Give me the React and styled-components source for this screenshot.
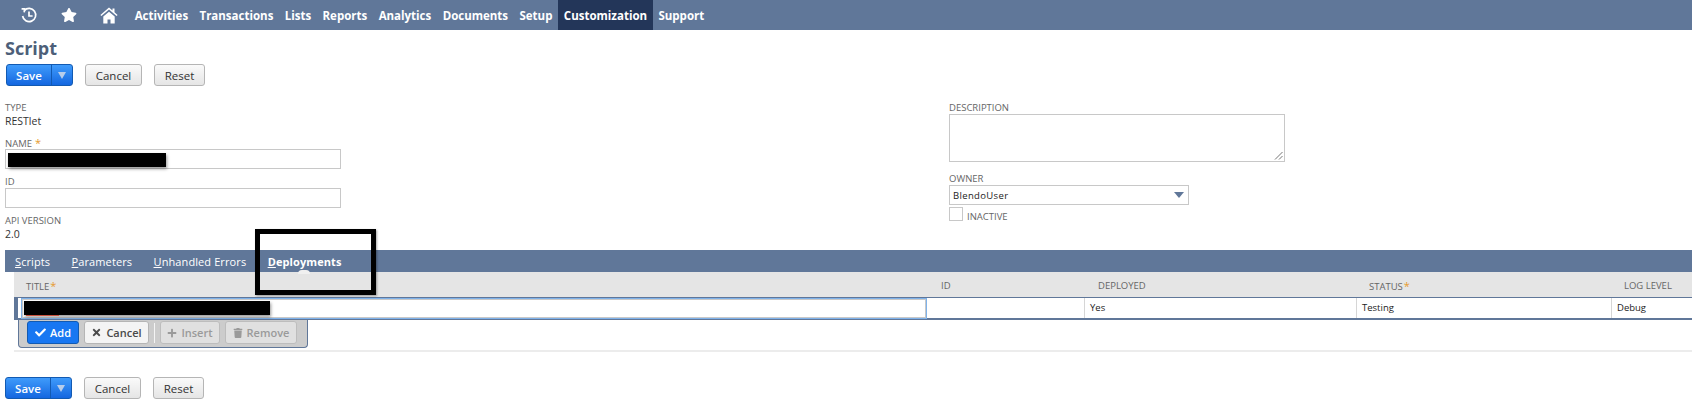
import React from 'react'
import styled, { createGlobalStyle } from 'styled-components'
import { FaStar, FaCheck, FaTimes, FaPlus, FaTrash } from 'react-icons/fa'

const GlobalStyle = createGlobalStyle`
  html, body { margin: 0; padding: 0; background: #fff; overflow: hidden; }
  body { font-family: "Open Sans", sans-serif; color: #333; }
`

const Page = styled.div`
  position: relative;
  width: 1692px;
  height: 408px;
  overflow: hidden;
`

const NavBar = styled.div`
  display: flex;
  align-items: stretch;
  height: 30px;
  background: #607799;
`

const NavIcons = styled.div`
  display: flex;
  align-items: center;
  gap: 23px;
  padding: 0 11px 0 20px;
  color: #fff;
`

const NavItem = styled.div`
  display: flex;
  align-items: center;
  padding: 0 5.7px;
  font-size: 11.5px;
  font-weight: 700;
  color: #fff;
  background: ${p => (p.$active ? '#233659' : 'transparent')};
`

const Title = styled.h1`
  margin: 6px 0 0 5px;
  font-size: 18px;
  line-height: 24px;
  font-weight: 700;
  color: #4d5f79;
`

const ButtonRow = styled.div`
  display: flex;
  margin: ${p => p.$margin};
`

const SaveButton = styled.div`
  display: flex;
  box-sizing: border-box;
  height: 22px;
  margin-right: 12px;
  border: 1px solid #125ab2;
  border-radius: 3px;
  background: linear-gradient(#3f9bfb, #1467e0);
  color: #fff;
  font-size: 11.5px;
  font-weight: 600;
`

const SaveLabel = styled.div`
  display: flex;
  align-items: center;
  justify-content: center;
  width: 44px;
  border-right: 1px solid #125ab2;
`

const SaveArrow = styled.div`
  display: flex;
  align-items: center;
  justify-content: center;
  width: 20px;
`

const ArrowGlyph = styled.span`
  width: 0;
  height: 0;
  border-left: 4px solid transparent;
  border-right: 4px solid transparent;
  border-top: 7px solid #b7cdea;
`

const GreyButton = styled.div`
  display: flex;
  align-items: center;
  justify-content: center;
  box-sizing: border-box;
  width: ${p => p.$width}px;
  height: 22px;
  margin-right: 12px;
  border: 1px solid #b5b5b5;
  border-radius: 3px;
  background: linear-gradient(#fafafa, #e5e5e5);
  color: #333;
  font-size: 11.5px;
`

const Form = styled.div`
  display: grid;
  grid-template-columns: 944px 1fr;
  margin: 14px 0 0 5px;
  height: 150px;
`

const Column = styled.div`
  display: flex;
  flex-direction: column;
`

const Label = styled.div`
  font-size: 9.5px;
  line-height: 14px;
  height: 13px;
  padding-top: 1px;
  color: #666;
  margin-top: ${p => p.$top || 0}px;
`

const Star = styled.span`
  color: #e69a2e;
  margin-left: ${p => p.$gap || 3}px;
  font-size: 11px;
`

const Value = styled.div`
  font-size: 10.5px;
  line-height: 14px;
  color: #333;
`

const TextInput = styled.div`
  position: relative;
  box-sizing: border-box;
  width: ${p => p.$width}px;
  height: ${p => p.$height}px;
  border: 1px solid #c8c8c8;
  background: #fff;
`

const Redaction = styled.div`
  position: absolute;
  left: ${p => p.$left}px;
  top: ${p => p.$top}px;
  width: ${p => p.$width}px;
  height: 14px;
  background: #000;
  box-shadow: 1px 2px 3px rgba(0, 0, 0, 0.4);
`

const RedTrace = styled.div`
  position: absolute;
  left: 3px;
  top: 15px;
  width: 33px;
  height: 1px;
  background: #c8503c;
`

const Grip = styled.svg`
  position: absolute;
  right: 1px;
  bottom: 1px;
`

const SelectBox = styled(TextInput)`
  display: flex;
  align-items: center;
  justify-content: space-between;
  padding: 0 3px;
  font-size: 9.5px;
  letter-spacing: 0.35px;
  color: #222;
`

const SelectArrow = styled.span`
  width: 0;
  height: 0;
  margin-right: 1px;
  border-left: 5px solid transparent;
  border-right: 5px solid transparent;
  border-top: 6px solid #607799;
`

const CheckRow = styled.div`
  display: flex;
  align-items: flex-end;
  gap: 4px;
  margin-top: 2px;
`

const CheckBox = styled.div`
  box-sizing: border-box;
  width: 14px;
  height: 14px;
  border: 1px solid #c8c8c8;
`

const CheckLabel = styled.div`
  font-size: 9.5px;
  line-height: 11px;
  margin-bottom: -1px;
  color: #666;
`

const TabBar = styled.div`
  display: flex;
  align-items: center;
  gap: 21.4px;
  height: 22px;
  margin-left: 5px;
  padding-left: 10px;
  background: #607799;
`

const Tab = styled.div`
  position: relative;
  font-size: 11px;
  color: #fff;
  font-weight: ${p => (p.$active ? 700 : 400)};
  letter-spacing: 0.1px;

  u { text-underline-offset: 1px; }
`

const TabNotch = styled.span`
  position: absolute;
  left: 50%;
  bottom: -5px;
  margin-left: -7px;
  width: 12px;
  height: 4px;
  border-radius: 6px 6px 0 0;
  background: #f0f0f0;
`

const Machine = styled.div`
  margin-left: 14px;
`

const HeaderRow = styled.div`
  display: grid;
  grid-template-columns: 914px 157px 272px 255px 1fr;
  align-items: center;
  box-sizing: border-box;
  height: 25px;
  padding-top: 1px;
  background: #e5e5e5;
`

const HeaderCell = styled.div`
  font-size: 9.5px;
  color: #666;
  padding-left: ${p => p.$pad}px;
  white-space: nowrap;
`

const DataRow = styled.div`
  display: grid;
  grid-template-columns: 914px 157px 272px 255px 1fr;
  height: 23px;
  box-sizing: border-box;
  border-top: 1px solid #607799;
  border-bottom: 2px solid #607799;
`

const EntryCell = styled.div`
  display: flex;
  align-items: center;
  border-left: 4px solid #607799;
  padding-left: 4px;
`

const EntryInput = styled(TextInput)`
  box-shadow: 0 0 0 1px #7fb2ea;
`

const DataCell = styled.div`
  display: flex;
  align-items: center;
  padding: 0 0 2px ${p => p.$pad || 4}px;
  border-right: 1px solid #d6d6d6;
  font-size: 9.5px;
  color: #222;
  &:last-child { border-right: 0; }
`

const ToolbarWrap = styled.div`
  box-sizing: border-box;
  height: 32px;
  border-bottom: 2px solid #ececec;
`

const Toolbar = styled.div`
  display: flex;
  align-items: center;
  gap: 5px;
  box-sizing: border-box;
  width: 290px;
  height: 28px;
  margin-left: 3.5px;
  padding: 0 0 2px 8.5px;
  background: #cccccc;
  border: 1px solid #607799;
  border-top: 0;
  border-radius: 0 0 4px 4px;
`

const ToolButton = styled.div`
  display: flex;
  align-items: center;
  justify-content: center;
  gap: 4px;
  box-sizing: border-box;
  width: ${p => p.$width}px;
  height: 23px;
  border-radius: 3px;
  font-size: 11px;
  font-weight: 600;
  border: 1px solid ${p => (p.$primary ? '#125ab2' : p.$disabled ? '#bdbdbd' : '#b5b5b5')};
  background: ${p => (p.$primary ? '#1877f2' : p.$disabled ? '#e0e0e0' : '#f4f4f4')};
  color: ${p => (p.$primary ? '#fff' : p.$disabled ? '#9a9a9a' : '#4a4a4a')};
`

const ToolDivider = styled.div`
  width: 1px;
  height: 20px;
  background: #f4f4f4;
`

const Highlight = styled.div`
  position: absolute;
  left: 255px;
  top: 229px;
  box-sizing: border-box;
  width: 121px;
  height: 66px;
  border: 5px solid #000;
  box-shadow: 1px 1px 2px rgba(0, 0, 0, 0.35);
`

function ActionButtons({ margin }) {
  return (
    <ButtonRow $margin={margin}>
      <SaveButton>
        <SaveLabel>Save</SaveLabel>
        <SaveArrow><ArrowGlyph /></SaveArrow>
      </SaveButton>
      <GreyButton $width={57}>Cancel</GreyButton>
      <GreyButton $width={51}>Reset</GreyButton>
    </ButtonRow>
  )
}

export default function App() {
  const menu = ['Activities', 'Transactions', 'Lists', 'Reports', 'Analytics', 'Documents', 'Setup', 'Customization', 'Support']

  return (
    <Page>
      <GlobalStyle />
      <NavBar>
        <NavIcons>
          <svg width="18" height="18" viewBox="0 0 18 18" fill="none" stroke="#fff" strokeWidth="1.7">
            <path d="M4.2 4.6A6.6 6.6 0 1 1 2.6 10" />
            <path d="M1.6 2.8l3 .1-.4 3.4" />
            <path d="M9 5.5V10H12.6" />
          </svg>
          <FaStar size={16} />
          <svg width="18" height="17" viewBox="0 0 18 17" fill="#fff">
            <path d="M9 0.5L0.4 8l1 1.1L9 2.6l7.6 6.5 1-1.1L14.5 5.3V1.5h-2v2L9 .5z" />
            <path d="M3.3 9.6L9 4.7l5.7 4.9v6.9H10.5v-4h-3v4H3.3z" />
          </svg>
        </NavIcons>
        {menu.map(item => (
          <NavItem key={item} $active={item === 'Customization'}>{item}</NavItem>
        ))}
      </NavBar>

      <Title>Script</Title>
      <ActionButtons margin="4px 0 0 6px" />

      <Form>
        <Column>
          <Label>TYPE</Label>
          <Value>RESTlet</Value>
          <Label $top={7}>NAME<Star>*</Star></Label>
          <TextInput $width={336} $height={20}>
            <Redaction $left={2} $top={3} $width={158} />
          </TextInput>
          <Label $top={5}>ID</Label>
          <TextInput $width={336} $height={20} />
          <Label $top={5}>API VERSION</Label>
          <Value>2.0</Value>
        </Column>
        <Column>
          <Label>DESCRIPTION</Label>
          <TextInput $width={336} $height={48}>
            <Grip width="9" height="9" viewBox="0 0 9 9" stroke="#777" strokeWidth="1">
              <path d="M1 8.5L8.5 1M5 8.5L8.5 5" />
            </Grip>
          </TextInput>
          <Label $top={9}>OWNER</Label>
          <SelectBox $width={240} $height={20}>
            BlendoUser
            <SelectArrow />
          </SelectBox>
          <CheckRow>
            <CheckBox />
            <CheckLabel>INACTIVE</CheckLabel>
          </CheckRow>
        </Column>
      </Form>

      <TabBar>
        <Tab><u>S</u>cripts</Tab>
        <Tab><u>P</u>arameters</Tab>
        <Tab><u>U</u>nhandled Errors</Tab>
        <Tab $active><u>D</u>eployments<TabNotch /></Tab>
      </TabBar>

      <Machine>
        <HeaderRow>
          <HeaderCell $pad={12}>TITLE<Star $gap={1}>*</Star></HeaderCell>
          <HeaderCell $pad={13}>ID</HeaderCell>
          <HeaderCell $pad={13}>DEPLOYED</HeaderCell>
          <HeaderCell $pad={12}>STATUS<Star $gap={1}>*</Star></HeaderCell>
          <HeaderCell $pad={12}>LOG LEVEL</HeaderCell>
        </HeaderRow>
        <DataRow>
          <EntryCell>
            <EntryInput $width={904} $height={19}>
              <Redaction $left={1} $top={1} $width={246} />
              <RedTrace />
            </EntryInput>
          </EntryCell>
          <DataCell />
          <DataCell $pad={5}>Yes</DataCell>
          <DataCell $pad={5}>Testing</DataCell>
          <DataCell $pad={5}>Debug</DataCell>
        </DataRow>
        <ToolbarWrap>
          <Toolbar>
            <ToolButton $primary $width={52}><FaCheck size={11} />Add</ToolButton>
            <ToolButton $width={65}><FaTimes size={11} />Cancel</ToolButton>
            <ToolDivider />
            <ToolButton $disabled $width={60}><FaPlus size={10} />Insert</ToolButton>
            <ToolButton $disabled $width={72}><FaTrash size={10} />Remove</ToolButton>
          </Toolbar>
        </ToolbarWrap>
      </Machine>

      <ActionButtons margin="25px 0 0 5px" />
      <Highlight />
    </Page>
  )
}
